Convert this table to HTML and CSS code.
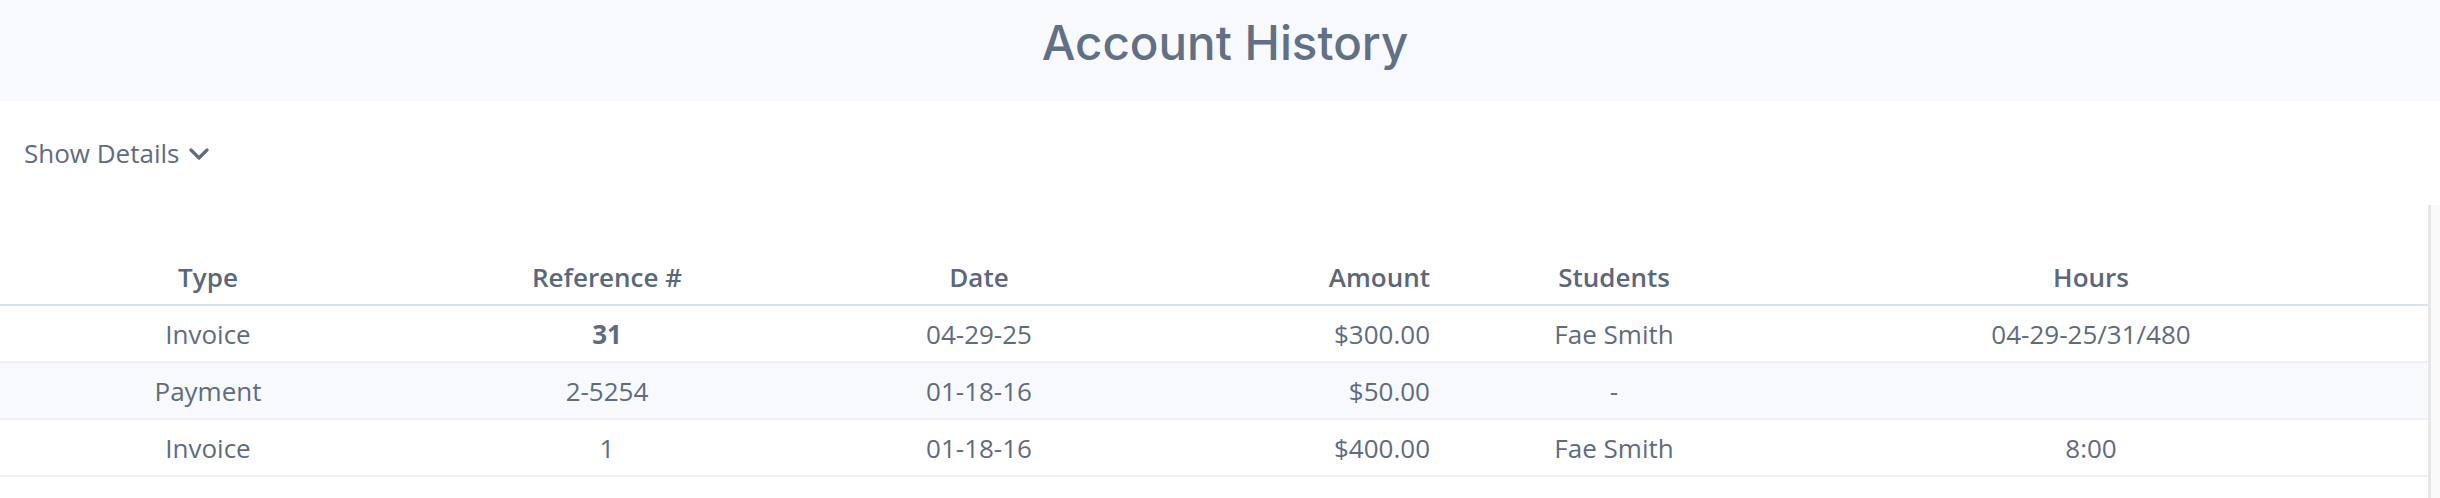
FILE: index.html
```html
<!DOCTYPE html>
<html lang="en">
<head>
    <meta charset="UTF-8">
    <meta name="viewport" content="width=device-width, initial-scale=1.0">
    <title>Account History</title>
    <link rel="stylesheet" href="styles.css">
</head>
<body>
    <div class="page-header">
        <h1>Account History</h1>
    </div>

    <div class="details-toggle">
        <span>Show Details</span>
        <svg class="chevron" width="20" height="12" viewBox="0 0 20 12">
            <polyline points="2,2 10,10 18,2" fill="none" stroke="currentColor" stroke-width="3.2" stroke-linecap="round" stroke-linejoin="round"/>
        </svg>
    </div>

    <div class="history-wrap">
        <div class="history-scroll">
            <table class="history">
                <colgroup>
                    <col style="width: 416px">
                    <col style="width: 382px">
                    <col style="width: 362px">
                    <col style="width: 314px">
                    <col style="width: 280px">
                    <col style="width: 674px">
                </colgroup>
                <thead>
                    <tr>
                        <th>Type</th>
                        <th>Reference #</th>
                        <th>Date</th>
                        <th class="amount">Amount</th>
                        <th>Students</th>
                        <th>Hours</th>
                    </tr>
                </thead>
                <tbody>
                    <tr>
                        <td>Invoice</td>
                        <td><strong>31</strong></td>
                        <td>04-29-25</td>
                        <td class="amount">$300.00</td>
                        <td>Fae Smith</td>
                        <td>04-29-25/31/480</td>
                    </tr>
                    <tr class="payment">
                        <td>Payment</td>
                        <td>2-5254</td>
                        <td>01-18-16</td>
                        <td class="amount">$50.00</td>
                        <td>-</td>
                        <td></td>
                    </tr>
                    <tr>
                        <td>Invoice</td>
                        <td>1</td>
                        <td>01-18-16</td>
                        <td class="amount">$400.00</td>
                        <td>Fae Smith</td>
                        <td>8:00</td>
                    </tr>
                </tbody>
            </table>
        </div>
        <div class="scroll-track"></div>
    </div>
</body>
</html>
```

FILE: styles.css
```css
html, body {
    margin: 0;
    height: 100%;
}
body {
    font-family: "Open Sans", "Liberation Sans", sans-serif;
    color: #5f6b7e;
    background-color: #fff;
    overflow: hidden;
    display: flex;
    flex-direction: column;
}
.page-header {
    background-color: #f8f9fd;
    height: 101px;
    box-sizing: border-box;
    padding-top: 15px;
    text-align: center;
}
.page-header h1 {
    margin: 0;
    font-family: Inter, "Noto Sans", sans-serif;
    font-weight: 500;
    font-size: 47.5px;
    line-height: 55px;
    color: #627085;
    padding-left: 10px;
}
.details-toggle {
    display: flex;
    align-items: center;
    gap: 10px;
    margin-top: 34px;
    padding-left: 24px;
    font-size: 26px;
    line-height: 36px;
    color: #5f6c80;
}
.chevron {
    margin-top: 2px;
}
.history-wrap {
    flex: 1;
    display: flex;
    margin-top: 34px;
}
.history-scroll {
    flex: 1;
    padding-top: 44px;
}
.scroll-track {
    width: 9px;
    border-left: 3px solid #e6e6e6;
    background-color: #fafafa;
}
.history {
    width: 100%;
    table-layout: fixed;
    border-collapse: collapse;
    font-size: 26px;
    line-height: 36px;
}
.history th,
.history td {
    height: 55px;
    padding: 0 44px;
    text-align: center;
    vertical-align: middle;
    white-space: nowrap;
}
.history th {
    font-weight: 600;
    color: #5b677b;
    border-bottom: 2px solid #dbe3ed;
}
.history td {
    border-bottom: 2px solid #edf0f6;
}
.history .amount { text-align: right; }
.history tr.payment td { background-color: #f7f9fd; }
.history strong { font-weight: 700; }
```
